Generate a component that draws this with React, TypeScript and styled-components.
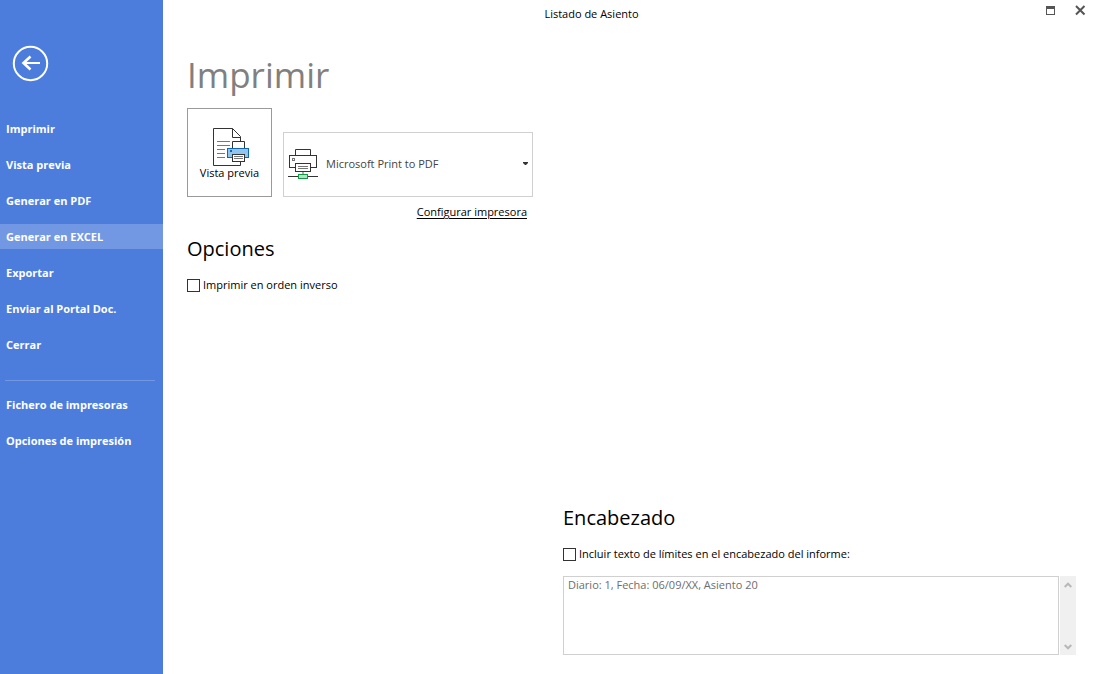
import React from 'react';
import styled, { createGlobalStyle } from 'styled-components';

const GlobalStyle = createGlobalStyle`
  *, *::before, *::after { box-sizing: border-box; }
  body {
    margin: 0;
    background: #fff;
    color: #000;
    font: 11px/16px "Open Sans", "Noto Sans", sans-serif;
  }
  button, select, textarea, input { font: inherit; color: inherit; margin: 0; }
`;

const Page = styled.div`
  display: flex;
  min-height: 100vh;
`;

const Sidebar = styled.aside`
  flex: 0 0 163px;
  background: #4d7ddc;
  color: #fff;
  padding-top: 45px;
`;

const BackButton = styled.button`
  display: block;
  margin: 0 0 34px 12px;
  padding: 0;
  border: 0;
  background: none;
  line-height: 0;
`;

const Menu = styled.ul`
  list-style: none;
  margin: 0;
  padding: 0;
  display: flex;
  flex-direction: column;
  gap: 11px;
`;

const MenuButton = styled.button<{ $active?: boolean }>`
  display: block;
  width: 100%;
  height: 25px;
  padding: 0 6px;
  border: 0;
  background: ${(p) => (p.$active ? '#7398e3' : 'transparent')};
  text-align: left;
  font-weight: 700;
  white-space: nowrap;
`;

const Divider = styled.hr`
  height: 1px;
  margin: 23px 8px 11px 5px;
  border: 0;
  background: #7398e3;
`;

const Main = styled.main`
  flex: 1;
  min-width: 0;
  display: flex;
  flex-direction: column;
`;

const TitleBar = styled.header`
  display: flex;
  height: 28px;
`;

const WindowTitle = styled.div`
  flex: 1;
  text-align: center;
  line-height: 28px;
`;

const WindowControls = styled.div`
  display: flex;
  justify-content: flex-end;
  align-items: flex-start;
  gap: 19px;
  width: 75px;
  padding: 5px 9px 0 0;
`;

const WindowButton = styled.button`
  padding: 0;
  border: 0;
  background: none;
  line-height: 0;
`;

const Content = styled.div`
  flex: 1;
  display: grid;
  grid-template-columns: 346px minmax(0, 1fr);
  column-gap: 30px;
  padding: 22px 19px 19px 24px;
`;

const HeaderSection = styled.section`
  align-self: end;
`;

const PageTitle = styled.h1`
  margin: 0;
  color: #808080;
  font-size: 35px;
  font-weight: 400;
  line-height: 50px;
`;

const SectionTitle = styled.h2`
  margin: 0;
  font-size: 20px;
  font-weight: 400;
  line-height: 28px;
`;

const PrintRow = styled.div`
  display: flex;
  align-items: flex-end;
  gap: 11px;
  margin-top: 8px;
`;

const PreviewButton = styled.button`
  display: flex;
  flex-direction: column;
  align-items: center;
  width: 85px;
  height: 89px;
  padding: 19px 0 0;
  border: 1px solid #9a9a9a;
  background: #fff;
  line-height: 14px;
`;

const PrinterField = styled.label`
  flex: 1;
  display: flex;
  align-items: center;
  height: 65px;
  padding: 0 4px 2px;
  border: 1px solid #d0d0d0;
  color: #444;
`;

const PrinterSelect = styled.select`
  appearance: none;
  flex: 1;
  min-width: 0;
  height: 30px;
  padding: 0 8px;
  border: 0;
  background: transparent;
`;

const SetupLine = styled.div`
  margin: 7px 6px 15px 0;
  text-align: right;
`;

const SetupLink = styled.a`
  color: #000;
  text-decoration: underline;
  text-underline-offset: 2px;
`;

const CheckLabel = styled.label`
  display: flex;
  align-items: center;
  gap: 3px;
  margin-top: 14px;
`;

const CheckBox = styled.input`
  appearance: none;
  flex: none;
  width: 13px;
  height: 13px;
  border: 1px solid #333;
  background: #fff;
  &:checked { background: #4d7ddc; }
`;

const TextRow = styled.div`
  display: flex;
  gap: 1px;
  height: 79px;
  margin-top: 14px;
`;

const LimitsText = styled.textarea`
  flex: 1;
  min-width: 0;
  padding: 0 4px;
  border: 1px solid #d0d0d0;
  resize: none;
  overflow: hidden;
  color: #6d6d6d;
`;

const ScrollBar = styled.div`
  display: flex;
  flex-direction: column;
  justify-content: space-between;
  width: 16px;
  background: #f0f0f0;
`;

const ScrollButton = styled.button`
  display: flex;
  justify-content: center;
  align-items: center;
  height: 17px;
  padding: 0;
  border: 0;
  background: none;
`;

const BackIcon = () => (
  <svg width="37" height="37" viewBox="0 0 37 37" fill="none" stroke="#fff">
    <circle cx="18.5" cy="18.5" r="16.7" strokeWidth="2" />
    <path d="M28 18H11" strokeWidth="2" />
    <path d="M18.500 11.500L11.500 18l7 6.500" strokeWidth="2.600" />
  </svg>
);

const PreviewIcon = () => (
  <svg width="41" height="38" viewBox="-4 0 41 38" fill="none">
    <path d="M.5 37.500V.5H19.500L27.500 8.500V37.500Z" stroke="#333" fill="#fff" />
    <path d="M19.500.5V9.500H27.500" stroke="#333" />
    <path d="M4 13.500H17M4 17.500H17M4 21.500H12M4 25.500H12M4 29.500H12" stroke="#777" />
    <path d="M19.500 20.500V13.500H31.500V20.500" stroke="#333" fill="#fff" />
    <rect x="14.500" y="20.500" width="21" height="9" stroke="#1167b1" fill="#92c5ee" />
    <rect x="17" y="22" width="2" height="2" fill="#1167b1" />
    <rect x="19.500" y="26.500" width="12" height="7" stroke="#333" fill="#fff" />
    <path d="M21 28.500H30M21 30.500H30" stroke="#777" />
  </svg>
);

const PrinterIcon = () => (
  <svg width="30" height="30" viewBox="0 0 30 30" fill="none">
    <path d="M7.500 6.500V.5H22.500V6.500" stroke="#333" />
    <rect x="1.500" y="6.500" width="27" height="12" stroke="#333" fill="#fff" />
    <rect x="4.500" y="9.500" width="2" height="2" stroke="#777" />
    <rect x="7.500" y="14.500" width="15" height="8" stroke="#333" fill="#fff" />
    <path d="M10 17.500H20M10 19.500H20" stroke="#777" />
    <path d="M15 23V25" stroke="#b0b0b0" strokeWidth="2" />
    <path d="M0 27.500H10M20 27.500H30" stroke="#333" />
    <rect x="10.500" y="25.500" width="9" height="4" stroke="#109a45" fill="#b9dfc0" />
  </svg>
);

const Chevron = ({ down }: { down?: boolean }) => (
  <svg width="8" height="6" viewBox="0 0 8 6" fill="none" stroke="#b8b8b8" strokeWidth="2">
    <path d={down ? 'M.700 1L4 4.300L7.300 1' : 'M.700 5L4 1.700L7.300 5'} />
  </svg>
);

const actions = [
  'Imprimir',
  'Vista previa',
  'Generar en PDF',
  'Generar en EXCEL',
  'Exportar',
  'Enviar al Portal Doc.',
  'Cerrar',
];
const settings = ['Fichero de impresoras', 'Opciones de impresión'];

export default function App() {
  return (
    <>
      <GlobalStyle />
      <Page>
        <Sidebar>
          <BackButton type="button" aria-label="Volver">
            <BackIcon />
          </BackButton>
          <nav>
            <Menu>
              {actions.map((name) => (
                <li key={name}>
                  <MenuButton type="button" $active={name === 'Generar en EXCEL'}>
                    {name}
                  </MenuButton>
                </li>
              ))}
            </Menu>
            <Divider />
            <Menu>
              {settings.map((name) => (
                <li key={name}>
                  <MenuButton type="button">{name}</MenuButton>
                </li>
              ))}
            </Menu>
          </nav>
        </Sidebar>
        <Main>
          <TitleBar>
            <WindowTitle>Listado de Asiento</WindowTitle>
            <WindowControls>
              <WindowButton type="button" aria-label="Maximizar">
                <svg width="11" height="11" viewBox="0 0 11 11">
                  <path d="M1 1H10V10H1ZM2 4V9H9V4Z" fill="#555" fillRule="evenodd" />
                </svg>
              </WindowButton>
              <WindowButton type="button" aria-label="Cerrar ventana">
                <svg width="11" height="11" viewBox="0 0 11 11">
                  <path d="M1 1L9.500 9.500M9.500 1L1 9.500" stroke="#555" strokeWidth="2" />
                </svg>
              </WindowButton>
            </WindowControls>
          </TitleBar>
          <Content>
            <section>
              <PageTitle>Imprimir</PageTitle>
              <PrintRow>
                <PreviewButton type="button">
                  <PreviewIcon />
                  Vista previa
                </PreviewButton>
                <PrinterField>
                  <PrinterIcon />
                  <PrinterSelect aria-label="Impresora" defaultValue="pdf">
                    <option value="pdf">Microsoft Print to PDF</option>
                  </PrinterSelect>
                  <svg width="5" height="3" viewBox="0 0 5 3">
                    <path d="M0 0H5V1L3 3H2L0 1Z" fill="#333" />
                  </svg>
                </PrinterField>
              </PrintRow>
              <SetupLine>
                <SetupLink href="#configurar">Configurar impresora</SetupLink>
              </SetupLine>
              <SectionTitle>Opciones</SectionTitle>
              <CheckLabel>
                <CheckBox type="checkbox" />
                Imprimir en orden inverso
              </CheckLabel>
            </section>
            <HeaderSection>
              <SectionTitle>Encabezado</SectionTitle>
              <CheckLabel>
                <CheckBox type="checkbox" />
                Incluir texto de límites en el encabezado del informe:
              </CheckLabel>
              <TextRow>
                <LimitsText
                  aria-label="Texto de límites"
                  defaultValue="Diario: 1, Fecha: 06/09/XX, Asiento 20"
                />
                <ScrollBar>
                  <ScrollButton type="button" aria-label="Subir">
                    <Chevron />
                  </ScrollButton>
                  <ScrollButton type="button" aria-label="Bajar">
                    <Chevron down />
                  </ScrollButton>
                </ScrollBar>
              </TextRow>
            </HeaderSection>
          </Content>
        </Main>
      </Page>
    </>
  );
}
